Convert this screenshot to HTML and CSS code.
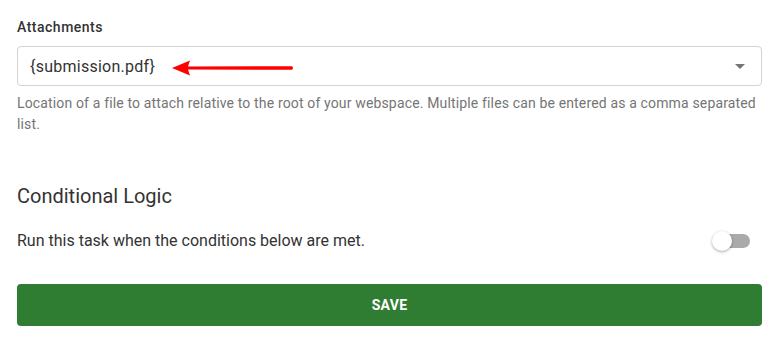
FILE: index.html
```html
<!DOCTYPE html>
<html>
<head>
<meta charset="utf-8">
<link rel="stylesheet" href="styles.css">
</head>
<body>
<div class="page">
  <div class="field">
    <label class="label">Attachments</label>
    <div class="select">
      <span class="value">{submission.pdf}</span>
      <svg class="arrow" width="124" height="18" viewBox="0 0 124 18">
        <path d="M1 9 L19 1.5 L17 7.5 L121 7.2 Q123 9 121 10.8 L17 10.5 L19 16.5 Z" fill="#f00"/>
      </svg>
      <span class="caret"></span>
    </div>
    <p class="help">Location of a file to attach relative to the root of your webspace. Multiple files can be entered as a comma separated list.</p>
  </div>
  <h2 class="heading">Conditional Logic</h2>
  <div class="row">
    <span class="row-text">Run this task when the conditions below are met.</span>
    <span class="switch"><span class="track"></span><span class="knob"></span></span>
  </div>
  <button class="save">SAVE</button>
</div>
</body>
</html>
```
FILE: styles.css
```css
html, body {
  margin: 0;
  padding: 0;
  background: #fff;
}
body {
  font-family: Roboto, "Liberation Sans", sans-serif;
  color: #333;
}
.page {
  padding: 17px 16px 0 17px;
  display: flex;
  flex-direction: column;
}
.field {
  display: flex;
  flex-direction: column;
}
.label {
  font-size: 14px;
  font-weight: 500;
  line-height: 20px;
  letter-spacing: 0.5px;
  color: #333;
}
.select {
  margin-top: 9px;
  height: 38px;
  border: 1px solid #d3d3d3;
  border-radius: 4px;
  display: flex;
  align-items: center;
  padding: 0 16px 0 12px;
}
.value {
  font-size: 16px;
  letter-spacing: 0.25px;
  color: #333;
  padding-top: 1px;
}
.arrow {
  margin-left: 16px;
  margin-top: 3px;
}
.caret {
  margin-left: auto;
  width: 0;
  height: 0;
  border-left: 5px solid transparent;
  border-right: 5px solid transparent;
  border-top: 5px solid #757575;
}
.help {
  margin: 7px 0 0;
  font-size: 14px;
  line-height: 21px;
  letter-spacing: 0.15px;
  color: #757575;
}
.heading {
  margin: 47px 0 0;
  font-size: 20px;
  font-weight: 400;
  line-height: 28px;
  color: #333;
}
.row {
  margin-top: 19px;
  display: flex;
  align-items: center;
  justify-content: space-between;
  height: 24px;
}
.row-text {
  font-size: 16px;
  line-height: 24px;
}
.switch {
  position: relative;
  width: 38px;
  height: 20px;
  margin-right: 12px;
}
.track {
  position: absolute;
  left: 4px;
  top: 3px;
  width: 34px;
  height: 14px;
  border-radius: 7px;
  background: #aaa;
}
.knob {
  position: absolute;
  left: 0;
  top: 0;
  width: 20px;
  height: 20px;
  border-radius: 50%;
  background: #fff;
  box-shadow: 0 1px 3px rgba(0,0,0,0.35);
}
.save {
  margin-top: 31px;
  height: 42px;
  border: none;
  border-radius: 4px;
  background: #2e7d32;
  color: #fff;
  font-family: Roboto, "Liberation Sans", sans-serif;
  font-size: 14px;
  font-weight: 700;
  letter-spacing: 0.3px;
}
```
